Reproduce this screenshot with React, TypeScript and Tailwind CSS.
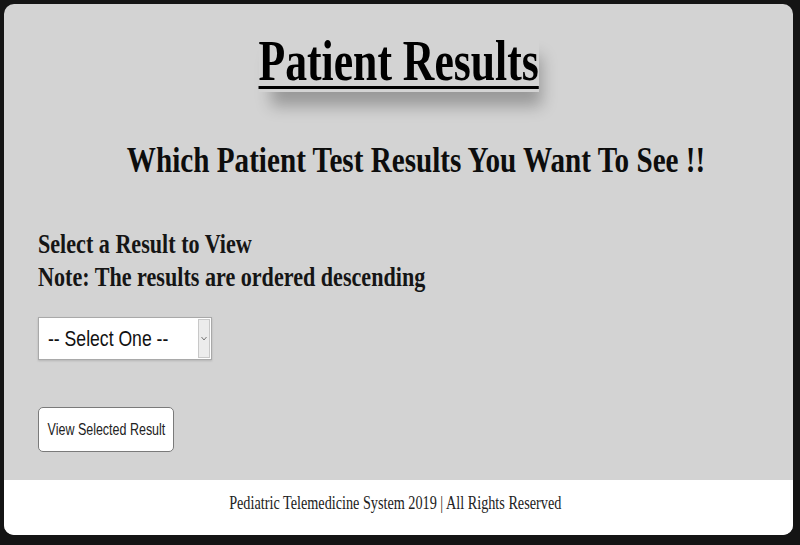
export default function App() {
  const serif = { fontFamily: '"Liberation Serif", "Times New Roman", serif' };
  const sans = { fontFamily: '"Liberation Sans", Arial, sans-serif' };
  return (
    <div className="w-[800px] h-[545px] bg-[#141414] pt-[4px] pl-[4px] pr-[7px] pb-[10px] overflow-hidden">
      <div className="w-full h-full flex flex-col rounded-[10px] overflow-hidden bg-[#d3d3d3]">
        <div className="flex-1 flex flex-col pt-[26px]" style={serif}>
          <div className="flex justify-center">
            <h1 className="inline-block scale-x-[0.78] origin-center text-[56px] leading-[62px] font-bold text-black underline decoration-[3px] underline-offset-[6px] shadow-[10px_20px_18px_-6px_rgba(0,0,0,0.28)]">
              Patient Results
            </h1>
          </div>
          <div className="flex justify-center mt-[48px] pl-[36px]">
            <h2 className="inline-block scale-x-[0.81] origin-center text-[36px] leading-[40px] font-bold text-[#0d0d0d]">
              Which Patient Test Results You Want To See !!
            </h2>
          </div>
          <div className="mt-[47px] pl-[34px] flex flex-col items-start">
            <div className="scale-x-[0.79] origin-left text-[28px] leading-[33px] font-bold text-[#151515] whitespace-nowrap">
              Select a Result to View
            </div>
            <div className="scale-x-[0.79] origin-left text-[28px] leading-[33px] font-bold text-[#151515] whitespace-nowrap">
              Note: The results are ordered descending
            </div>
          </div>
          <div className="mt-[24px] ml-[34px] w-[174px] h-[43px] flex bg-white border border-[#a9a9a9] shadow-[0_1px_2px_rgba(0,0,0,0.15)]">
            <div className="flex-1 flex items-center pl-[9px]" style={sans}>
              <span className="inline-block scale-x-[0.8] origin-left text-[22px] text-[#111] whitespace-nowrap">
                -- Select One --
              </span>
            </div>
            <div className="w-[13px] my-[1px] mr-[1px] bg-[#ececec] border border-[#c8c8c8] flex items-center justify-center">
              <svg width="6" height="5" viewBox="0 0 6 5">
                <path d="M0.5 1 L3 4 L5.5 1" fill="none" stroke="#777" strokeWidth="1" />
              </svg>
            </div>
          </div>
          <div className="mt-[47px] ml-[34px]">
            <div className="w-[136px] h-[45px] bg-white border border-[#7a7a7a] rounded-[5px] flex items-center justify-center" style={sans}>
              <span className="inline-block scale-x-[0.78] origin-center text-[16px] text-[#222] whitespace-nowrap">
                View Selected Result
              </span>
            </div>
          </div>
        </div>
        <div className="h-[55px] bg-white flex justify-center pt-[13px] pr-[6px]" style={serif}>
          <span className="inline-block scale-x-[0.79] origin-center text-[18px] leading-[20px] text-[#222] whitespace-nowrap">
            Pediatric Telemedicine System 2019 | All Rights Reserved
          </span>
        </div>
      </div>
    </div>
  );
}
